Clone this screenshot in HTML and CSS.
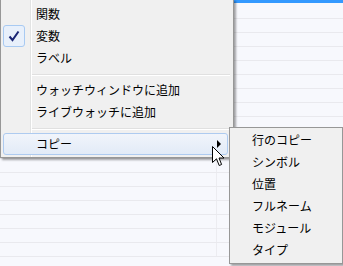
FILE: index.html
```html
<!DOCTYPE html>
<html lang="ja">
<head>
    <meta charset="UTF-8">
    <title>Context menu</title>
    <link rel="stylesheet" href="styles.css">
</head>
<body>
<div class="grid">
    <div class="row first"><div class="cell name"></div><div class="cell value selected"></div></div>
    <div class="row"><div class="cell name"></div><div class="cell value"></div></div>
    <div class="row"><div class="cell name"></div><div class="cell value"></div></div>
    <div class="row"><div class="cell name"></div><div class="cell value"></div></div>
    <div class="row"><div class="cell name"></div><div class="cell value"></div></div>
    <div class="row"><div class="cell name"></div><div class="cell value"></div></div>
    <div class="row"><div class="cell name"></div><div class="cell value"></div></div>
    <div class="row"><div class="cell name"></div><div class="cell value"></div></div>
    <div class="row"><div class="cell name"></div><div class="cell value"></div></div>
    <div class="row"><div class="cell name"></div><div class="cell value"></div></div>
    <div class="row"><div class="cell name"></div><div class="cell value"></div></div>
    <div class="row"><div class="cell name"></div><div class="cell value"></div></div>
    <div class="row"><div class="cell name"></div><div class="cell value"></div></div>
    <div class="row"><div class="cell name"></div><div class="cell value"></div></div>
    <div class="row"><div class="cell name"></div><div class="cell value"></div></div>
    <div class="row"><div class="cell name"></div><div class="cell value"></div></div>
    <div class="row"><div class="cell name"></div><div class="cell value"></div></div>
    <div class="row"><div class="cell name"></div><div class="cell value"></div></div>
</div>

<!-- main context menu -->
<div class="menu main-menu">
    <div class="item">関数</div>
    <div class="item checked">
        <span class="check">
            <svg width="12" height="12" viewBox="0 0 12 12"><path d="M1.5 6.5 L4.5 10 L10.5 1.5" fill="none" stroke="#1a2574" stroke-width="2"/></svg>
        </span>
        変数
    </div>
    <div class="item">ラベル</div>
    <div class="sep"></div>
    <div class="item">ウォッチウィンドウに追加</div>
    <div class="item">ライブウォッチに追加</div>
    <div class="sep"></div>
    <div class="item hover">コピー<span class="arrow"></span></div>
</div>

<!-- copy submenu -->
<div class="menu sub-menu">
    <div class="item">行のコピー</div>
    <div class="item">シンボル</div>
    <div class="item">位置</div>
    <div class="item">フルネーム</div>
    <div class="item">モジュール</div>
    <div class="item">タイプ</div>
</div>

<svg class="cursor" width="13" height="21" viewBox="0 0 13 21">
    <path d="M0.5 0.5 L0.5 16.5 L4.5 12.8 L7.2 19.5 L9.6 18.5 L7 12 L12 12 Z" fill="#fff" stroke="#000" stroke-width="1" stroke-linejoin="miter"/>
</svg>
</body>
</html>
```

FILE: styles.css
```css
body {
    margin: 0;
    width: 343px;
    height: 266px;
    overflow: hidden;
    background: #f7f8fd;
    font-family: "Noto Sans CJK JP", "Noto Sans", sans-serif;
    font-size: 12px;
    color: #000;
}

.grid {
    display: flex;
    flex-direction: column;
}

.row {
    display: flex;
    height: 13px;
    border-bottom: 1px solid #e9e9ee;
}

.row.first {
    height: 18px;
}

.cell.name {
    width: 216px;
    border-right: 1px solid #ececf1;
}

.cell.value {
    flex: 1;
}

.cell.selected {
    height: 3px;
    background: #3399ff;
}

.menu {
    position: absolute;
    background: #f0f0f0;
    border: 1px solid #979797;
    box-shadow: 2px 2px 2px rgba(0, 0, 0, 0.35);
    box-sizing: border-box;
}

.main-menu {
    left: 0;
    top: -1px;
    width: 234px;
    padding: 3px 3px 2px 2px;
}

.main-menu::before {
    content: "";
    position: absolute;
    left: 29px;
    top: 0;
    bottom: 0;
    width: 1px;
    background: #e2e3e3;
    border-right: 1px solid #fff;
}

.item {
    position: relative;
    height: 22px;
    display: flex;
    align-items: center;
    padding-left: 33px;
    line-height: 1;
    box-sizing: border-box;
}

.sep {
    height: 1px;
    margin: 5px 0 3px 28px;
    background: #e0e0e0;
    border-bottom: 1px solid #fff;
}

.check {
    position: absolute;
    left: 0;
    top: 0;
    width: 22px;
    height: 22px;
    box-sizing: border-box;
    border: 1px solid #a8caf2;
    border-radius: 3px;
    background: #e8f0fb;
    display: flex;
    align-items: center;
    justify-content: center;
}

.item.hover {
    border: 1px solid #aecbf0;
    border-radius: 3px;
    background: linear-gradient(#f1f5fb, #e2ebf7);
    padding-left: 32px;
    margin-right: 2px;
}

.arrow {
    position: absolute;
    right: 6px;
    top: 6px;
    border-left: 4px solid #000;
    border-top: 4px solid transparent;
    border-bottom: 4px solid transparent;
}

.sub-menu {
    left: 229px;
    top: 127px;
    width: 114px;
    padding: 1px 2px 2px 2px;
}

.sub-menu .item {
    padding-left: 20px;
}

.cursor {
    position: absolute;
    left: 212px;
    top: 146px;
}
```
